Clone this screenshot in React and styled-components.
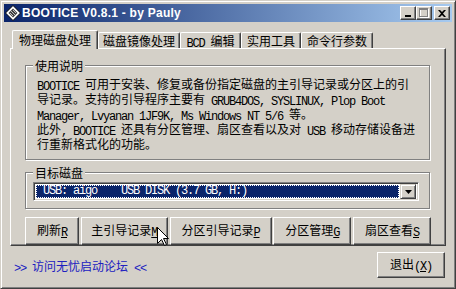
import React from 'react';
import styled, { createGlobalStyle } from 'styled-components';

const face = '#d4d0c8';
const cjk = '"Noto Sans CJK SC", "Liberation Sans", sans-serif';
const mono = '"Liberation Mono", "Noto Sans CJK SC", monospace';

const GlobalStyle = createGlobalStyle`
    html, body {
        margin: 0;
        padding: 0;
        background: ${face};
    }
    body {
        font-family: ${cjk};
        font-size: 12px;
        color: #000;
    }
`;

const Window = styled.div`
    position: relative;
    width: 456px;
    height: 289px;
    box-sizing: border-box;
    background: ${face};
    border: 1px solid;
    border-color: ${face} #404040 #404040 ${face};
    box-shadow: inset 1px 1px 0 #fff, inset -1px -1px 0 #808080;
    padding: 3px;
    display: flex;
    flex-direction: column;
`;

const TitleBar = styled.div`
    height: 18px;
    display: flex;
    align-items: center;
    padding: 0 2px 0 1px;
    background: linear-gradient(to right, #0a246a, #a6caf0);
`;

const TitleText = styled.div`
    flex: 1;
    margin-left: 1px;
    color: #fff;
    font-family: "Liberation Sans", Arial, sans-serif;
    font-weight: bold;
    font-size: 12px;
    letter-spacing: 0.25px;
    line-height: 18px;
    white-space: nowrap;
`;

const CaptionButton = styled.div`
    width: 16px;
    height: 14px;
    box-sizing: border-box;
    margin-left: ${(p) => p.gap}px;
    background: ${face};
    border: 1px solid;
    border-color: #fff #404040 #404040 #fff;
    box-shadow: inset -1px -1px 0 #808080;
    display: flex;
    align-items: center;
    justify-content: center;
`;

const Client = styled.div`
    flex: 1;
    display: flex;
    flex-direction: column;
    padding: 8px 6px 0 6px;
`;

const TabRow = styled.div`
    display: flex;
    align-items: flex-end;
    height: 18px;
    padding-left: 2px;
    position: relative;
    z-index: 1;
`;

const Tab = styled.div`
    width: ${(p) => p.width}px;
    height: ${(p) => (p.active ? 19 : 16)}px;
    margin-bottom: ${(p) => (p.active ? -1 : 0)}px;
    box-sizing: border-box;
    background: ${face};
    border-top: 1px solid #fff;
    border-left: 1px solid #fff;
    border-right: 1px solid #404040;
    border-radius: 2px 2px 0 0;
    box-shadow: inset -1px 0 0 #808080;
    text-align: center;
    line-height: ${(p) => (p.active ? 17 : 15)}px;
    white-space: nowrap;
`;

const Panel = styled.div`
    height: 198px;
    box-sizing: border-box;
    border: 1px solid;
    border-color: #fff #404040 #404040 #fff;
    box-shadow: inset -1px -1px 0 #808080;
    padding: 16px 14px 0 14px;
    display: flex;
    flex-direction: column;
`;

const Group = styled.div`
    position: relative;
    margin-top: ${(p) => p.top || 0}px;
    margin-right: 1px;
    border: 1px solid #808080;
    box-shadow: 1px 1px 0 #fff, inset 1px 1px 0 #fff;
    padding: ${(p) => p.pad};
`;

const Legend = styled.div`
    position: absolute;
    top: -7px;
    left: 7px;
    padding: 0 2px;
    background: ${face};
    line-height: 13px;
`;

const Desc = styled.div`
    line-height: 12px;
    white-space: nowrap;
`;

const Ascii = styled.span`
    font-family: ${mono};
    font-size: 12px;
    letter-spacing: -1.2px;
    white-space: pre;
    vertical-align: -1px;
`;

const Key = styled(Ascii)`
    text-decoration: underline;
`;

const Combo = styled.div`
    height: 19px;
    box-sizing: border-box;
    display: flex;
    border: 1px solid;
    border-color: #808080 #fff #fff #808080;
    box-shadow: inset 1px 1px 0 #404040, inset -1px -1px 0 ${face};
    background: #fff;
    padding: 2px;
`;

const ComboValue = styled.div`
    flex: 1;
    margin-right: 1px;
    background: #0a246a;
    outline: 1px dotted #fff;
    outline-offset: -1px;
    color: #fff;
    padding-left: 7px;
    height: 13px;
    overflow: hidden;
`;

const ComboText = styled(Ascii)`
    display: block;
    line-height: 13px;
    vertical-align: top;
`;

const DropButton = styled.div`
    width: 16px;
    margin: -1px 0;
    box-sizing: border-box;
    background: ${face};
    border: 1px solid;
    border-color: ${face} #404040 #404040 ${face};
    box-shadow: inset 1px 1px 0 #fff, inset -1px -1px 0 #808080;
    display: flex;
    align-items: center;
    justify-content: center;
`;

const ButtonRow = styled.div`
    display: flex;
    justify-content: space-between;
    margin-top: 8px;
`;

const Button = styled.div`
    width: ${(p) => p.width}px;
    height: ${(p) => p.height || 28}px;
    box-sizing: border-box;
    background: ${face};
    border: 1px solid;
    border-color: #fff #404040 #404040 #fff;
    box-shadow: inset -1px -1px 0 #808080;
    display: flex;
    align-items: center;
    justify-content: center;
`;

const ButtonLabel = styled.span`
    white-space: nowrap;
    line-height: 14px;
`;

const Footer = styled.div`
    flex: 1;
    display: flex;
    align-items: flex-start;
    justify-content: space-between;
    padding: 6px 1px 0 4px;
`;

const Link = styled.div`
    color: #2020c0;
    margin-top: 7px;
    line-height: 13px;
    white-space: nowrap;
`;

const Cursor = styled.svg`
    position: absolute;
    left: 156px;
    top: 226px;
    pointer-events: none;
`;

const mixed = (text) => text
    .split(/([\x20-\x7e]+)/)
    .filter(Boolean)
    .map((part, i) => (/^[\x20-\x7e]+$/.test(part) ? <Ascii key={i}>{part}</Ascii> : part));

const tabs = [
    { label: '物理磁盘处理', width: 86, active: true },
    { label: '磁盘镜像处理', width: 82 },
    { label: 'BCD 编辑', width: 61 },
    { label: '实用工具', width: 60 },
    { label: '命令行参数', width: 72 },
];

const lines = [
    'BOOTICE 可用于安装、修复或备份指定磁盘的主引导记录或分区上的引',
    '导记录。支持的引导程序主要有 GRUB4DOS, SYSLINUX, Plop Boot',
    'Manager, Lvyanan 1JF9K, Ms Windows NT 5/6 等。',
    '此外, BOOTICE 还具有分区管理、扇区查看以及对 USB 移动存储设备进',
    '行重新格式化的功能。',
];

const actions = [
    { label: '刷新', key: 'R', width: 54 },
    { label: '主引导记录', key: 'M', width: 87 },
    { label: '分区引导记录', key: 'P', width: 102 },
    { label: '分区管理', key: 'G', width: 78 },
    { label: '扇区查看', key: 'S', width: 78 },
];

const AppIcon = () => (
    <svg width="16" height="16" viewBox="0 0 16 16">
        <polygon points="8,0.5 15.5,8 8,15.5 0.5,8" fill="#fff" stroke="#000" />
        <polygon points="8,3.5 12.5,8 8,12.5 3.5,8" fill="#404040" />
        <line x1="6" y1="6" x2="10" y2="10" stroke="#c0c0c0" />
        <line x1="5" y1="8" x2="8" y2="11" stroke="#c0c0c0" />
        <line x1="8" y1="5" x2="11" y2="8" stroke="#c0c0c0" />
    </svg>
);

const App = () => (
    <Window>
        <GlobalStyle />
        <TitleBar>
            <AppIcon />
            <TitleText>BOOTICE V0.8.1 - by Pauly</TitleText>
            <CaptionButton>
                <svg width="8" height="7" viewBox="0 0 8 7">
                    <rect x="1" y="5" width="6" height="2" fill="#000" />
                </svg>
            </CaptionButton>
            <CaptionButton>
                <svg width="10" height="10" viewBox="0 0 10 10">
                    <rect x="1.5" y="1.5" width="8" height="8" fill="none" stroke="#fff" />
                    <rect x="0.5" y="0.5" width="8" height="8" fill="none" stroke="#808080" />
                    <rect x="0" y="1" width="9" height="1" fill="#808080" />
                </svg>
            </CaptionButton>
            <CaptionButton gap={2}>
                <svg width="8" height="7" viewBox="0 0 8 7">
                    <path d="M0 0h2l2 2 2-2h2L5 3.5 8 7H6L4 5 2 7H0l3-3.5z" fill="#000" />
                </svg>
            </CaptionButton>
        </TitleBar>
        <Client>
            <TabRow>
                {tabs.map((t) => (
                    <Tab key={t.label} width={t.width} active={t.active}>{mixed(t.label)}</Tab>
                ))}
            </TabRow>
            <Panel>
                <Group pad="12px 0 9px 11px">
                    <Legend>使用说明</Legend>
                    {lines.map((l) => <Desc key={l}>{mixed(l)}</Desc>)}
                </Group>
                <Group top={12} pad="9px 10px 7px 7px">
                    <Legend>目标磁盘</Legend>
                    <Combo>
                        <ComboValue>
                            <ComboText>USB: aigo    USB DISK (3.7 GB, H:)</ComboText>
                        </ComboValue>
                        <DropButton>
                            <svg width="7" height="4" viewBox="0 0 7 4">
                                <path d="M0 0h7L3.5 4z" fill="#000" />
                            </svg>
                        </DropButton>
                    </Combo>
                </Group>
                <ButtonRow>
                    {actions.map((a) => (
                        <Button key={a.key} width={a.width}>
                            <ButtonLabel>{a.label}<Key>{a.key}</Key></ButtonLabel>
                        </Button>
                    ))}
                </ButtonRow>
            </Panel>
            <Footer>
                <Link>{mixed('>> 访问无忧启动论坛 <<')}</Link>
                <Button width={68} height={26}>
                    <ButtonLabel>
                        退出<Ascii>(</Ascii><Key>X</Key><Ascii>)</Ascii>
                    </ButtonLabel>
                </Button>
            </Footer>
        </Client>
        <Cursor width="13" height="20" viewBox="0 0 13 20">
            <path d="M0.5 0.5V16.5L4.5 12.5L7.5 18.5L9.5 17.5L6.5 11.5H11.5Z" fill="#fff" stroke="#000" />
        </Cursor>
    </Window>
);

export default App;
